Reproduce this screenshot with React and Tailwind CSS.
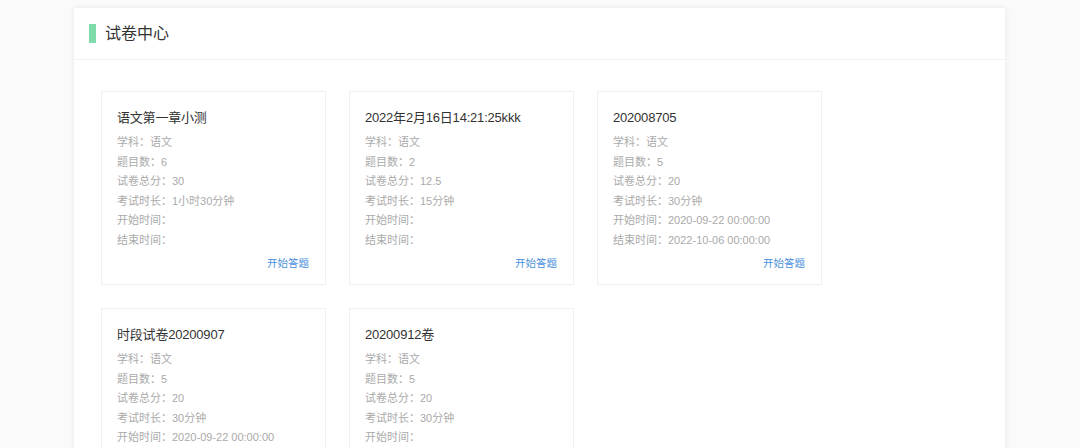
import React from 'react';

const papers = [
    { id: 1, name: '语文第一章小测', subject: '语文', count: 6, score: 30, duration: '1小时30分钟', start: '', end: '' },
    { id: 2, name: '2022年2月16日14:21:25kkk', subject: '语文', count: 2, score: 12.5, duration: '15分钟', start: '', end: '' },
    { id: 3, name: '202008705', subject: '语文', count: 5, score: 20, duration: '30分钟', start: '2020-09-22 00:00:00', end: '2022-10-06 00:00:00' },
    { id: 4, name: '时段试卷20200907', subject: '语文', count: 5, score: 20, duration: '30分钟', start: '2020-09-22 00:00:00', end: '' },
    { id: 5, name: '20200912卷', subject: '语文', count: 5, score: 20, duration: '30分钟', start: '', end: '' },
];

const PaperCard = ({ paper }) => {
    const rows = [
        ['学科', paper.subject],
        ['题目数', paper.count],
        ['试卷总分', paper.score],
        ['考试时长', paper.duration],
        ['开始时间', paper.start],
        ['结束时间', paper.end],
    ];
    return (
        <div className="w-[225px] h-[194px] border border-[#f0f0f0] bg-white px-[15px] pt-[17px]">
            <h4 className="text-[13px] leading-[18px] text-[#333] tracking-[-0.2px]">{paper.name}</h4>
            <ul className="mt-[6px]">
                {rows.map(([label, value]) => (
                    <li key={label} className="text-[11px] leading-[19.6px] text-[#aaa]">
                        {label}：{value}
                    </li>
                ))}
            </ul>
            <div className="flex justify-end mt-[3px] pr-[1px]">
                <button className="text-[10.5px] leading-[18px] text-[#4a8fde]">开始答题</button>
            </div>
        </div>
    );
};

const App = () => {
    return (
        <div
            className="h-[448px] bg-[#fafafa] pt-[8px] pl-[74px] w-[1080px] overflow-hidden"
            style={{ fontFamily: '"Liberation Sans", "Noto Sans CJK SC", sans-serif' }}
        >
            <div className="w-[931px] bg-white shadow-[0_0_6px_rgba(0,0,0,0.08)] h-[460px]">
                {/* 标题 */}
                <div className="h-[52px] flex items-center pl-[15px] border-b border-[#f3f3f3]">
                    <span className="w-[7px] h-[19px] bg-[#7fdcaa] mr-[9px]" />
                    <h1 className="text-[16px] text-[#333]">试卷中心</h1>
                </div>

                {/* 试卷列表 */}
                <div className="pl-[27px] pt-[31px] flex flex-wrap gap-[23px] w-[800px]">
                    {papers.map((p) => (
                        <PaperCard key={p.id} paper={p} />
                    ))}
                </div>
            </div>
        </div>
    );
};

export default App;
